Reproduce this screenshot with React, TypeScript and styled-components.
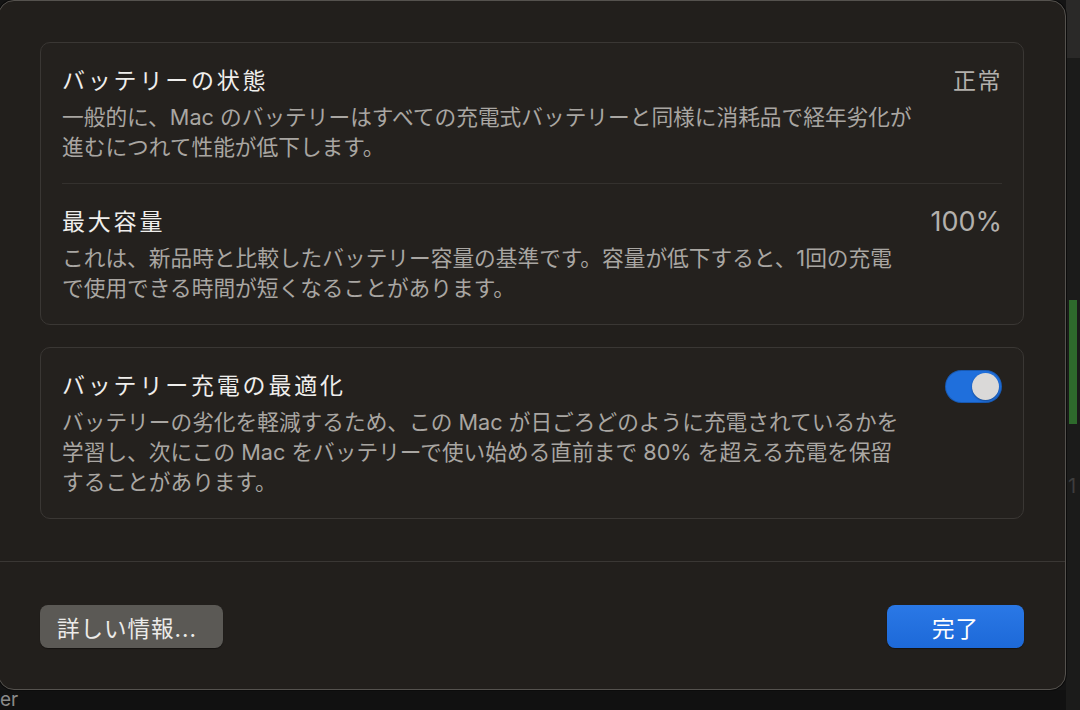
import React from "react";
import styled, { createGlobalStyle } from "styled-components";

const GlobalStyle = createGlobalStyle`
  body {
    margin: 0;
    background: #141414;
    overflow: hidden;
  }
`;

const FONT = `"Inter", "Noto Sans CJK JP", sans-serif`;

const Screen = styled.div`
  width: 1080px;
  height: 710px;
  display: grid;
  grid-template-columns: 1066px 14px;
  grid-template-rows: 690px 20px;
  background: #141414;
  font-family: ${FONT};
  overflow: hidden;
`;

const Dialog = styled.div`
  grid-column: 1;
  grid-row: 1;
  margin-left: -2px;
  width: 1068px;
  height: 690px;
  box-sizing: border-box;
  background: #221f1c;
  border: 1px solid #55524e;
  border-radius: 16px;
  box-shadow: 0 0 0 1px #0c0c0c;
  display: flex;
  flex-direction: column;
  position: relative;
  z-index: 1;
`;

const Body = styled.div`
  padding: 41px 41px 0;
  display: flex;
  flex-direction: column;
  gap: 22px;
`;

const Card = styled.section`
  background: #24211e;
  border: 1px solid #3a3734;
  border-radius: 10px;
  padding: 0 21px;
  display: flex;
  flex-direction: column;
`;

const Row = styled.div<{ $last?: boolean }>`
  display: flex;
  align-items: flex-start;
  justify-content: space-between;
  padding: 23px 0 21px;
  border-bottom: ${(p) => (p.$last ? "none" : "1px solid #34312e")};
`;

const Text = styled.div`
  display: flex;
  flex-direction: column;
  gap: 6px;
`;

const Title = styled.h2`
  margin: 0;
  font-size: 23px;
  line-height: 30px;
  font-weight: 400;
  letter-spacing: 2.8px;
  color: #efeeec;
`;

const Desc = styled.p`
  margin: 0;
  font-size: 21.7px;
  line-height: 30px;
  color: #a9a6a2;
  white-space: nowrap;
`;

const Value = styled.span<{ $latin?: boolean }>`
  font-size: ${(p) => (p.$latin ? "27px" : "23px")};
  line-height: 30px;
  letter-spacing: ${(p) => (p.$latin ? "0" : "1.5px")};
  color: #b3b0ac;
`;

const Toggle = styled.div`
  width: 57px;
  height: 33px;
  border-radius: 17px;
  background: #1f6fdc;
  box-sizing: border-box;
  padding: 3px;
  display: flex;
  justify-content: flex-end;
  margin-top: -1px;
  box-shadow: inset 0 0 0 1px rgba(0, 0, 0, 0.2);
`;

const Knob = styled.span`
  width: 27px;
  height: 27px;
  border-radius: 50%;
  background: #dad9d8;
  box-shadow: 0 1px 2px rgba(0, 0, 0, 0.35);
`;

const Divider = styled.hr`
  margin: 42px 0 0;
  border: none;
  border-top: 1px solid #3a3734;
`;

const Footer = styled.div`
  padding: 43px 41px 0;
  display: flex;
  justify-content: space-between;
`;

const Button = styled.button<{ $primary?: boolean }>`
  height: 43px;
  width: ${(p) => (p.$primary ? "137px" : "183px")};
  border: none;
  border-radius: 8px;
  font-family: ${FONT};
  font-size: 22.5px;
  letter-spacing: 1px;
  color: ${(p) => (p.$primary ? "#ffffff" : "#ecebe9")};
  background: ${(p) =>
    p.$primary ? "linear-gradient(#2a78e6, #1d69d8)" : "#5b5955"};
  text-align: ${(p) => (p.$primary ? "center" : "left")};
  padding: 0 ${(p) => (p.$primary ? "0" : "17px")};
  box-shadow: 0 1px 1px rgba(0, 0, 0, 0.4);
`;

const SideStrip = styled.div`
  grid-column: 2;
  grid-row: 1 / span 2;
  display: flex;
  flex-direction: column;
  background: #1b1b1a;
`;

const SideTop = styled.div`
  height: 58px;
  background: #2a2928;
`;

const GreenBar = styled.div`
  margin: 242px 0 0 3px;
  width: 8px;
  height: 124px;
  background: #2e6a2c;
`;

const SideLabel = styled.span`
  margin-top: 50px;
  padding-left: 2px;
  font-size: 20px;
  color: #3d3d3d;
`;

const BottomStrip = styled.div`
  grid-column: 1;
  grid-row: 2;
  background: #111111;
  display: flex;
  align-items: center;
`;

const BottomLabel = styled.span`
  font-size: 19px;
  line-height: 20px;
  color: #8a8a8a;
`;

export default function App() {
  return (
    <>
      <GlobalStyle />
      <Screen>
        <Dialog>
          <Body>
            <Card>
              <Row>
                <Text>
                  <Title>バッテリーの状態</Title>
                  <Desc>
                    一般的に、Mac のバッテリーはすべての充電式バッテリーと同様に消耗品で経年劣化が
                    <br />
                    進むにつれて性能が低下します。
                  </Desc>
                </Text>
                <Value>正常</Value>
              </Row>
              <Row $last>
                <Text>
                  <Title>最大容量</Title>
                  <Desc>
                    これは、新品時と比較したバッテリー容量の基準です。容量が低下すると、1回の充電
                    <br />
                    で使用できる時間が短くなることがあります。
                  </Desc>
                </Text>
                <Value $latin>100%</Value>
              </Row>
            </Card>
            <Card>
              <Row $last>
                <Text>
                  <Title>バッテリー充電の最適化</Title>
                  <Desc>
                    バッテリーの劣化を軽減するため、この Mac が日ごろどのように充電されているかを
                    <br />
                    学習し、次にこの Mac をバッテリーで使い始める直前まで 80% を超える充電を保留
                    <br />
                    することがあります。
                  </Desc>
                </Text>
                <Toggle>
                  <Knob />
                </Toggle>
              </Row>
            </Card>
          </Body>
          <Divider />
          <Footer>
            <Button>詳しい情報...</Button>
            <Button $primary>完了</Button>
          </Footer>
        </Dialog>
        <SideStrip>
          <SideTop />
          <GreenBar />
          <SideLabel>1</SideLabel>
        </SideStrip>
        <BottomStrip>
          <BottomLabel>er</BottomLabel>
        </BottomStrip>
      </Screen>
    </>
  );
}
